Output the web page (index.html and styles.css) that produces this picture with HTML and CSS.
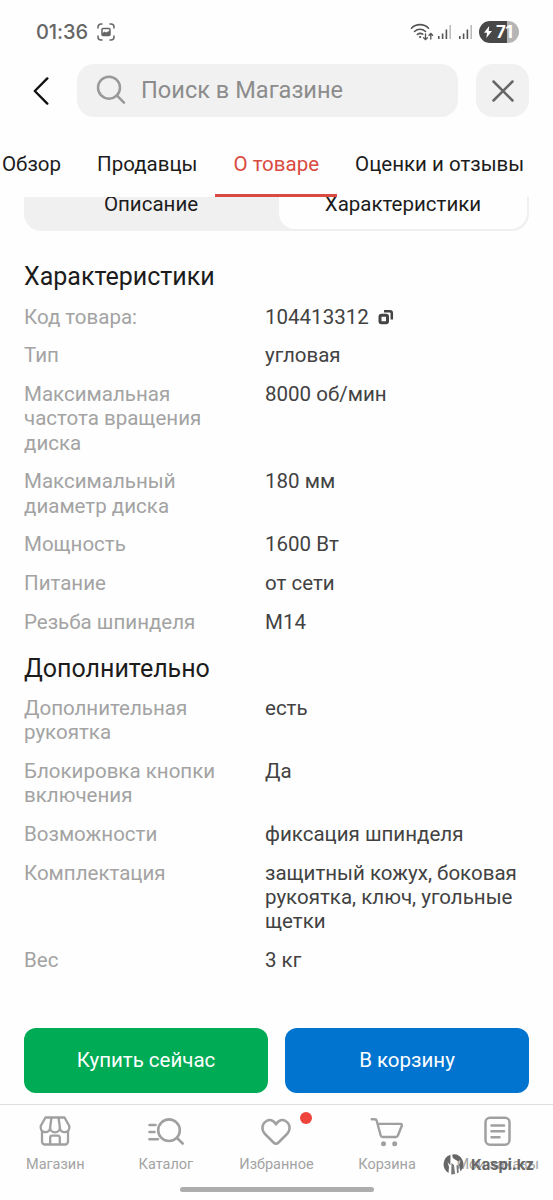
FILE: index.html
```
<!DOCTYPE html>
<html lang="ru">
<head>
  <meta charset="UTF-8"/>
  <title>О товаре</title>
  <link rel="stylesheet" href="styles.css">
</head>
<body>
  <div class="status">
    <span class="time">01:36</span>
    <svg class="shot" width="18" height="18" viewBox="0 0 18 18" fill="none" stroke="#666" stroke-width="1.5" stroke-linecap="round">
      <path d="M1 5V4a3 3 0 0 1 3-3h1M13 1h1a3 3 0 0 1 3 3v1M17 13v1a3 3 0 0 1-3 3h-1M5 17H4a3 3 0 0 1-3-3v-1"/>
      <rect x="5" y="5.500" width="8" height="7" rx="1"/>
      <path d="M5 12.500v-2l2.500-2 1.500 1 4-2v5z" fill="#666" stroke="none"/>
    </svg>
    <svg class="wifi" width="24" height="18" viewBox="0 0 24 18" fill="none" stroke="#555" stroke-width="1.6" stroke-linecap="round">
      <path d="M1.500 5.200a12 12 0 0 1 17 0M4.500 8.500a8 8 0 0 1 11 0M7.300 11.500a4.500 4.500 0 0 1 5.400-.3"/>
      <circle cx="10" cy="14" r=".7" fill="#555" stroke-width=".8"/>
      <path d="M15.500 11v5.500M13.600 14.800l1.900 1.900 1.900-1.900M20.800 16v-5.200M19 12.300l1.800-1.800 1.800 1.800" stroke-width="1.300"/>
    </svg>
    <svg class="signal" width="15" height="16" viewBox="0 0 15 16">
      <path d="M1 12h1.600v3H1zM4.800 9.500h1.600V15H4.800zM8.600 5.500h1.600V15H8.600z" fill="#555"/>
      <path d="M12.400 1h1.600v14h-1.600z" fill="#bbb"/>
    </svg>
    <svg class="signal" width="15" height="16" viewBox="0 0 15 16">
      <path d="M1 12h1.600v3H1zM4.800 9.500h1.600V15H4.800zM8.600 5.500h1.600V15H8.600z" fill="#555"/>
      <path d="M12.400 1h1.600v14h-1.600z" fill="#bbb"/>
    </svg>
    <div class="battery">
      <svg width="8" height="12" viewBox="0 0 8 12"><path d="M5.200 0L0 6.800h3L2.400 12 8 5H4.700z" fill="#fff"/></svg>
      <span>71</span>
    </div>
  </div>

  <div class="search-row">
    <svg class="back" width="16" height="28" viewBox="0 0 16 28" fill="none" stroke="#111" stroke-width="2.400" stroke-linecap="round" stroke-linejoin="round"><path d="M14.300 1.400L1.800 14l12.500 12.600"/></svg>
    <div class="search">
      <svg width="30" height="30" viewBox="0 0 30 30" fill="none" stroke="#999" stroke-width="2.500" stroke-linecap="round"><circle cx="13" cy="12.700" r="11"/><path d="M21 20.700l7 7"/></svg>
      <span>Поиск в Магазине</span>
    </div>
    <div class="close">
      <svg width="22" height="22" viewBox="0 0 22 22" stroke="#666" stroke-width="2.500" stroke-linecap="round"><path d="M1.500 1.500l19 19M20.500 1.500l-19 19"/></svg>
    </div>
  </div>

  <div class="tabs">
    <div class="tab">Обзор</div>
    <div class="tab">Продавцы</div>
    <div class="tab active">О товаре</div>
    <div class="tab">Оценки и отзывы</div>
  </div>

  <div class="main">
    <div class="segment">
      <div class="seg">Описание</div>
      <div class="seg selected">Характеристики</div>
    </div>

    <h2>Характеристики</h2>
    <dl>
      <dt>Код товара:</dt>
      <dd>104413312 <svg class="copy" width="16" height="16" viewBox="0 0 16 16" fill="none" stroke="#444" stroke-width="3" stroke-linejoin="round"><rect x="2" y="6.300" width="7.500" height="7.500" rx="1.500"/><path d="M6 2.200h6a1.800 1.800 0 0 1 1.800 1.800v6.500" stroke-width="2.500"/></svg></dd>
      <dt>Тип</dt>
      <dd>угловая</dd>
      <dt>Максимальная<br>частота вращения<br>диска</dt>
      <dd>8000 об/мин</dd>
      <dt>Максимальный<br>диаметр диска</dt>
      <dd>180 мм</dd>
      <dt>Мощность</dt>
      <dd>1600 Вт</dd>
      <dt>Питание</dt>
      <dd>от сети</dd>
      <dt>Резьба шпинделя</dt>
      <dd>М14</dd>
    </dl>

    <h2>Дополнительно</h2>
    <dl>
      <dt>Дополнительная<br>рукоятка</dt>
      <dd>есть</dd>
      <dt>Блокировка кнопки<br>включения</dt>
      <dd>Да</dd>
      <dt>Возможности</dt>
      <dd>фиксация шпинделя</dd>
      <dt>Комплектация</dt>
      <dd>защитный кожух, боковая<br>рукоятка, ключ, угольные<br>щетки</dd>
      <dt>Вес</dt>
      <dd>3 кг</dd>
    </dl>
  </div>

  <div class="buttons">
    <button class="btn buy">Купить сейчас</button>
    <button class="btn cart">В корзину</button>
  </div>

  <div class="nav">
    <div class="item">
      <svg width="34" height="34" viewBox="0 0 34 34" fill="none" stroke="#a0a0a0" stroke-width="2.300" stroke-linejoin="round">
        <path d="M4 15v11.500a3 3 0 0 0 3 3h20a3 3 0 0 0 3-3V15"/>
        <path d="M7.500 2.500h19l4.800 8.500v1.500a4.700 4.700 0 0 1-9.400 0 4.900 4.900 0 0 1-9.800 0 4.700 4.700 0 0 1-9.400 0V11z"/>
        <path d="M13.500 2.500l-1.400 10M20.500 2.500l1.400 10M12.200 29.500v-7a1.800 1.800 0 0 1 1.800-1.800h6a1.800 1.800 0 0 1 1.800 1.800v7"/>
      </svg>
      <span>Магазин</span>
    </div>
    <div class="item">
      <svg width="38" height="34" viewBox="0 0 38 34" fill="none" stroke="#a0a0a0" stroke-width="2.600" stroke-linecap="round"><circle cx="22" cy="15.200" r="10.800"/><path d="M30 23l5.700 5.500M2.500 10h6M2.500 17h5M2.500 24.300h8.500"/></svg>
      <span>Каталог</span>
    </div>
    <div class="item">
      <svg width="34" height="34" viewBox="0 0 34 34" fill="none" stroke="#a0a0a0" stroke-width="2.500" stroke-linejoin="round"><path d="M17 9.500C14.500 4.500 10 4.500 7.500 6 3 8.500 2 14 5.500 18.500L14.500 27.500Q17 30 19.500 27.500L28.500 18.500C32 14 31 8.500 26.500 6 24 4.500 19.500 4.500 17 9.500z"/></svg>
      <div class="dot"></div>
      <span>Избранное</span>
    </div>
    <div class="item">
      <svg width="34" height="34" viewBox="0 0 34 34" fill="none" stroke="#a0a0a0" stroke-width="2.400" stroke-linecap="round" stroke-linejoin="round"><path d="M1.800 4.200h3a2 2 0 0 1 1.900 1.500l4 14.800a2 2 0 0 0 2 1.500h13.200a2 2 0 0 0 1.900-1.300l4-10a1.300 1.300 0 0 0-1.200-1.800H7.600"/><circle cx="13.500" cy="28.800" r="1.300" fill="#a0a0a0"/><circle cx="24.700" cy="28.800" r="1.300" fill="#a0a0a0"/></svg>
      <span>Корзина</span>
    </div>
    <div class="item">
      <svg width="34" height="34" viewBox="0 0 34 34" fill="none" stroke="#a0a0a0" stroke-width="2.500" stroke-linecap="round"><rect x="4.500" y="2.700" width="24" height="27" rx="4.500"/><path d="M10.500 10.500h12.500M10.500 16.200h12.500M10.500 22.200h8"/></svg>
      <span>Мои заказы</span>
    </div>
    <div class="watermark">
      <svg width="21" height="21" viewBox="0 0 21 21">
        <path d="M7.500.8a10 10 0 0 0-2 18.100L6 13 4.500 8l2.800 3.200zM9.500.4c-.5 3 .5 4 2.500 5l3.500 2 1-2 1 1.500-1.500 4 1.500 6.500A10 10 0 0 0 9.500.4z" fill="#666"/>
        <path d="M8.500 9l2.500 2 1 9-3.800.4zM13.500 11l1.700.5.600 7-1.800.8z" fill="#777"/>
      </svg>
      <b>Kaspi.kz</b>
    </div>
  </div>
  <div class="home-bar"></div>
</body>
</html>
```
FILE: styles.css
```
* {
    box-sizing: border-box;
}
body {
    margin: 0;
    width: 553px;
    height: 1200px;
    overflow: hidden;
    display: flex;
    flex-direction: column;
    background-color: #fefefe;
    color: #1c1c1c;
    font-family: Roboto, "Noto Sans", sans-serif;
}
svg {
    flex: none;
    display: block;
}

/* Status bar */
.status {
    display: flex;
    align-items: center;
    height: 64px;
    padding: 0 34px 0 36px;
}
.time {
    width: 61px;
    font: 500 20px Inter, Roboto, sans-serif;
    color: #666;
    letter-spacing: -0.1px;
}
.wifi {
    margin-left: auto;
    margin-right: 3px;
}
.signal {
    margin-right: 6px;
}
.battery {
    display: flex;
    align-items: center;
    gap: 4px;
    width: 40px;
    height: 22px;
    padding-left: 5px;
    border-radius: 11px;
    background: linear-gradient(to right, #484848 71%, #b5b5b5 71%);
    color: white;
    font: bold 17px Inter, Roboto, sans-serif;
    letter-spacing: -0.5px;
}

/* Search */
.search-row {
    display: flex;
    align-items: center;
    height: 53px;
    padding: 0 24px 0 33px;
}
.search {
    display: flex;
    align-items: center;
    width: 382px;
    height: 53px;
    margin: 0 18px 0 28px;
    padding: 0 0 1px 19px;
    gap: 15px;
    border-radius: 17px;
    background-color: #f1f1f1;
    color: #8c8c8c;
    font-size: 23.6px;
}
.close {
    display: flex;
    align-items: center;
    justify-content: center;
    width: 53px;
    height: 53px;
    border-radius: 17px;
    background-color: #f1f1f1;
}

/* Tabs */
.tabs {
    display: flex;
    height: 80px;
    padding-top: 31px;
    margin-left: -16px;
    position: relative;
    z-index: 1;
}
.tab {
    flex: none;
    height: 49px;
    padding: 0 18px;
    font-size: 20.5px;
    line-height: 33px;
    white-space: nowrap;
}
.active {
    color: #d94a40;
    border-bottom: 3px solid #d94a40;
}

/* Product specs */
.main {
    height: 831px;
    padding: 0 24px;
    overflow: hidden;
}
.segment {
    display: flex;
    height: 50px;
    margin-top: -16px;
    padding: 2px;
    border-radius: 17px;
    background-color: #f0f0f0;
    font-size: 20.5px;
    line-height: 42px;
    text-align: center;
}
.seg {
    width: 253px;
    padding-right: 3px;
}
.selected {
    width: 248px;
    padding-right: 0;
    border-radius: 16px;
    background-color: #fefefe;
}
h2 {
    height: 30px;
    margin: 19.5px 0 12.4px;
    font-size: 25px;
    font-weight: 400;
    line-height: 30px;
}
.segment + h2 {
    margin-top: 31.3px;
}
dl {
    display: grid;
    grid-template-columns: 241px 1fr;
    row-gap: 14.6px;
    margin: 0;
    font-size: 20.53px;
    line-height: 24.2px;
    white-space: nowrap;
}
dt {
    color: #a3a3a3;
}
dd {
    margin: 0;
    color: #424242;
}
.copy {
    display: inline-block;
    margin-left: 4px;
    vertical-align: -1px;
}

/* Buttons */
.buttons {
    display: flex;
    gap: 17px;
    padding: 0 24px;
}
.btn {
    flex: 1;
    height: 65px;
    padding-bottom: 3px;
    border: none;
    border-radius: 12px;
    color: white;
    font-family: inherit;
    font-size: 20.5px;
}
.buy {
    background-color: #00ab55;
}
.cart {
    background-color: #0074cf;
}

/* Bottom navigation */
.nav {
    display: flex;
    height: 83px;
    margin-top: 11px;
    border-top: 1px solid #dfdfdf;
    position: relative;
}
.item {
    flex: 1;
    display: flex;
    flex-direction: column;
    align-items: center;
    padding-top: 10px;
    color: #a3a3a3;
    font-size: 14.5px;
    line-height: 32px;
    white-space: nowrap;
    position: relative;
}
.dot {
    position: absolute;
    top: 7px;
    right: 20px;
    width: 12px;
    height: 12px;
    border-radius: 50%;
    background-color: #ee443b;
}
.watermark {
    position: absolute;
    left: 443px;
    top: 49px;
    display: flex;
    align-items: center;
    gap: 7px;
    color: #666;
    font: 14.8px Inter, Roboto, sans-serif;
}
.home-bar {
    width: 194px;
    height: 5px;
    margin: 0 auto;
    border-radius: 3px;
    background-color: #adadad;
}
```
